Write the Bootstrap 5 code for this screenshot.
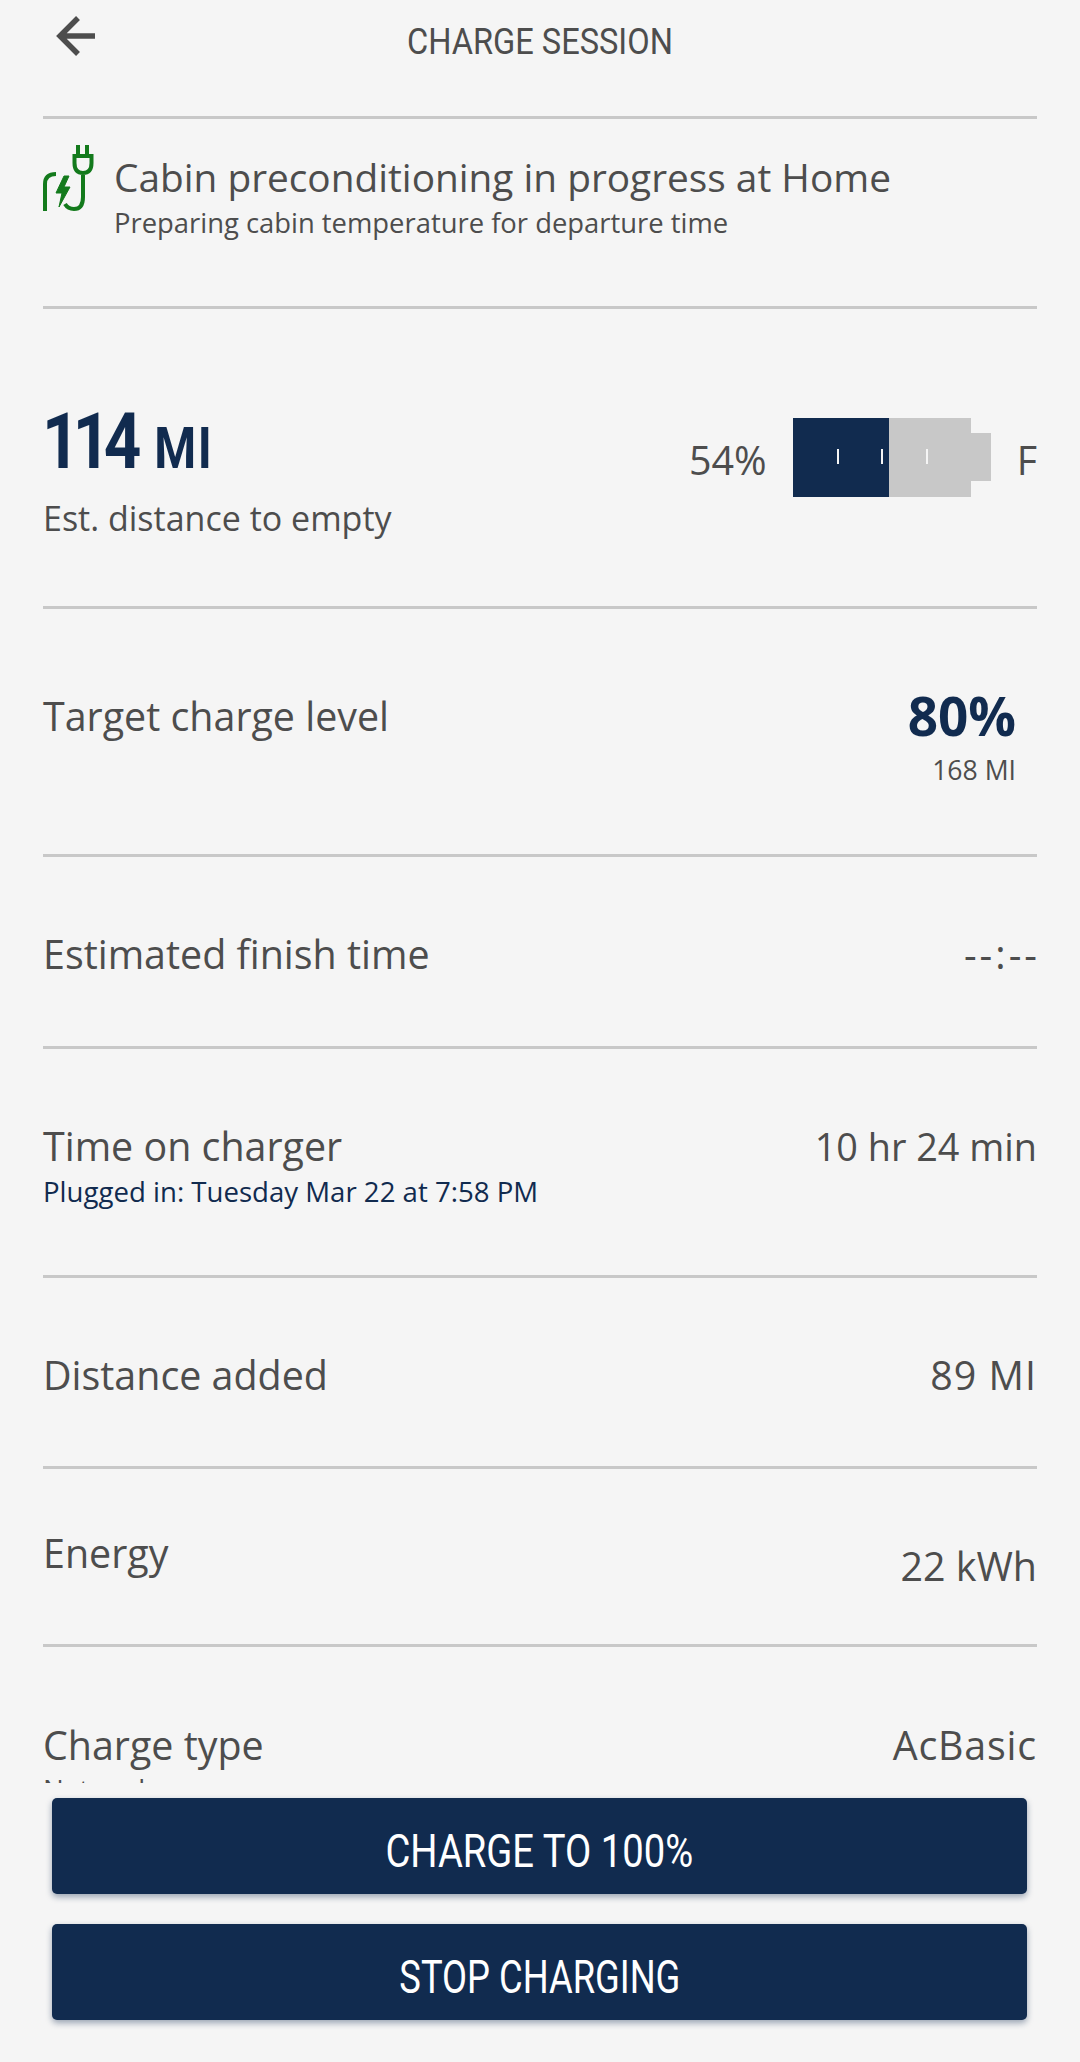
<!DOCTYPE html>
<html lang="en">
<head>
  <meta charset="UTF-8">
  <title>Charge Session</title>
  <link rel="stylesheet" href="https://cdn.jsdelivr.net/npm/bootstrap@5.3.0/dist/css/bootstrap.min.css">
  <style>
    html, body { margin: 0; height: 2062px; overflow: hidden; }
    body {
      background: #f5f5f5;
      color: #4d4d4d;
      font-family: "Open Sans", "Liberation Sans", sans-serif;
      font-size: 39.4px;
      line-height: 1.2;
    }
    .screen { width: 1080px; height: 2062px; }
    .scroller { height: 1783px; overflow: hidden; padding: 0 43px; }
    .cond { font-family: Roboto, "Liberation Sans", sans-serif; display: inline-block; }
    .topbar { height: 119px; position: relative; border-bottom: 3px solid #c8c8c8; }
    .topbar svg { position: absolute; left: 0; top: 0; }
    .page-title { height: 80px; text-align: center; }
    .page-title span { font-size: 36px; line-height: 84px; transform: scaleX(.905); }
    .info-row { border-bottom: 3px solid #c8c8c8; }
    .notice { height: 190px; padding-top: 33px; }
    .notice-icon { margin-top: -9px; margin-right: 0; }
    .notice-title { font-size: 38.800px; line-height: 50px; }
    .notice-sub { font-size: 27.400px; line-height: 34px; margin-top: 4px; }
    .range-row { height: 300px; padding-top: 98px; }
    .range-big { font-size: 78px; line-height: 70px; font-weight: 700; color: #112b4f; transform: scaleX(.84); transform-origin: left center; white-space: nowrap; letter-spacing: -8px; margin-left: -1px; }
    .range-unit { font-size: 57px; letter-spacing: 2px; margin-left: 12px; }
    .range-sub { margin-top: 14px; font-size: 34px; }
    .batt-wrap { gap: 26px; padding-top: 2px; }
    .batt-text { margin-top: 28px; }
    .batt { width: 198px; height: 79px; position: relative; margin-top: 9px; }
    .batt-body { position: absolute; left: 0; top: 0; width: 178px; height: 79px; background: #c8c8c8; }
    .batt-fill { position: absolute; left: 0; top: 0; height: 79px; background: #112b4f; }
    .batt-tip { position: absolute; left: 178px; top: 15px; width: 20px; height: 48px; background: #c8c8c8; }
    .batt-tick { position: absolute; top: 31px; width: 2px; height: 15px; background: #f5f5f5; }
    .target-row { height: 248px; padding: 84px 21px 0 0; }
    .target-val { font-size: 53px; line-height: 56px; font-weight: 700; color: #112b4f; margin-top: -5px; }
    .target-sub { font-size: 26.600px; line-height: 34px; margin-top: 9px; }
    .finish-row { height: 192px; padding-top: 7px; }
    .dashes { letter-spacing: 3px; margin-right: -3px; }
    .charger-row { height: 229px; padding-top: 74px; }
    .charger-val { font-size: 37.800px; line-height: 47px; }
    .plugged { font-size: 27.600px; line-height: 34px; color: #112b4f; margin-top: 4px; }
    .added-row { height: 191px; padding-top: 7px; }
    .added-val { letter-spacing: 1px; }
    .energy-row { height: 178px; padding-top: 61px; }
    .energy-val { margin-top: 13px; }
    .type-row { padding-top: 75px; }
    .type-val { letter-spacing: .8px; }
    .net-label { font-size: 27.600px; line-height: 34px; margin-top: 3px; }
    .footer-btns { padding: 15px 53px 0 52px; }
    .action-btn {
      background: #112b4f; color: #fff; border: 0; border-radius: 5px;
      height: 96px; width: 100%; margin-bottom: 30px; padding: 11px 0 0;
      box-shadow: 0 3px 6px rgba(17, 43, 79, .4);
    }
    .action-btn span { font-size: 46px; transform: scaleX(.83); white-space: nowrap; }
    .action-btn .stop-text { transform: scaleX(.79); }
  </style>
</head>
<body>
  <div class="screen d-flex flex-column">
    <div class="scroller">
      <div class="topbar">
        <svg width="60" height="60" viewBox="43 0 60 60" fill="none" stroke="#4d4d4d" stroke-width="5.5">
          <path d="M95 36H60M78 18L60 36L78 54"/>
        </svg>
        <div class="page-title"><span class="cond">CHARGE SESSION</span></div>
      </div>

      <div class="info-row notice d-flex">
        <svg width="71" height="70" viewBox="43 143 71 70" fill="none" stroke="#137a1c" stroke-width="4" class="flex-shrink-0 notice-icon">
          <path d="M78 145V156M87 145V156M74.500 156H91.500V163Q91.500 173 83 173Q74.500 173 74.500 163ZM83 173V197Q83 209 74 209Q68 209 65 204"/>
          <path d="M45 211V184Q45 174 56 174"/>
          <path d="M64 176L56 193H62L59 207L70 187H64L69 176Z" fill="#137a1c" stroke-width="1"/>
        </svg>
        <div>
          <div class="notice-title">Cabin preconditioning in progress at Home</div>
          <div class="notice-sub">Preparing cabin temperature for departure time</div>
        </div>
      </div>

      <div class="info-row range-row d-flex justify-content-between">
        <div>
          <div class="range-big cond">114 <span class="range-unit">MI</span></div>
          <div class="range-sub">Est. distance to empty</div>
        </div>
        <div class="d-flex align-items-start batt-wrap">
          <span class="batt-text">54%</span>
          <div class="batt">
            <div class="batt-body"></div>
            <div class="batt-fill" style="width:96px"></div>
            <div class="batt-tip"></div>
            <div class="batt-tick" style="left:44px"></div>
            <div class="batt-tick" style="left:88px"></div>
            <div class="batt-tick" style="left:133px"></div>
          </div>
          <span class="batt-text">F</span>
        </div>
      </div>

      <div class="info-row target-row d-flex justify-content-between">
        <div class="target-label">Target charge level</div>
        <div class="text-end">
          <div class="target-val">80%</div>
          <div class="target-sub">168 MI</div>
        </div>
      </div>

      <div class="info-row finish-row d-flex justify-content-between align-items-center">
        <span>Estimated finish time</span><span class="dashes">--:--</span>
      </div>

      <div class="info-row charger-row d-flex justify-content-between">
        <div>
          <div>Time on charger</div>
          <div class="plugged">Plugged in: Tuesday Mar 22 at 7:58 PM</div>
        </div>
        <div class="charger-val">10 hr 24 min</div>
      </div>

      <div class="info-row added-row d-flex justify-content-between align-items-center">
        <span>Distance added</span><span class="added-val">89 MI</span>
      </div>

      <div class="info-row energy-row d-flex justify-content-between">
        <div>Energy</div>
        <div class="energy-val">22 kWh</div>
      </div>

      <div class="type-row d-flex justify-content-between">
        <div>
          <div>Charge type</div>
          <div class="net-label">Network</div>
        </div>
        <div class="type-val">AcBasic</div>
      </div>
    </div>

    <div class="footer-btns">
      <button type="button" class="btn action-btn"><span class="cond">CHARGE TO 100%</span></button>
      <button type="button" class="btn action-btn"><span class="cond stop-text">STOP CHARGING</span></button>
    </div>
  </div>
  <script src="https://cdn.jsdelivr.net/npm/bootstrap@5.3.0/dist/js/bootstrap.bundle.min.js"></script>
</body>
</html>
